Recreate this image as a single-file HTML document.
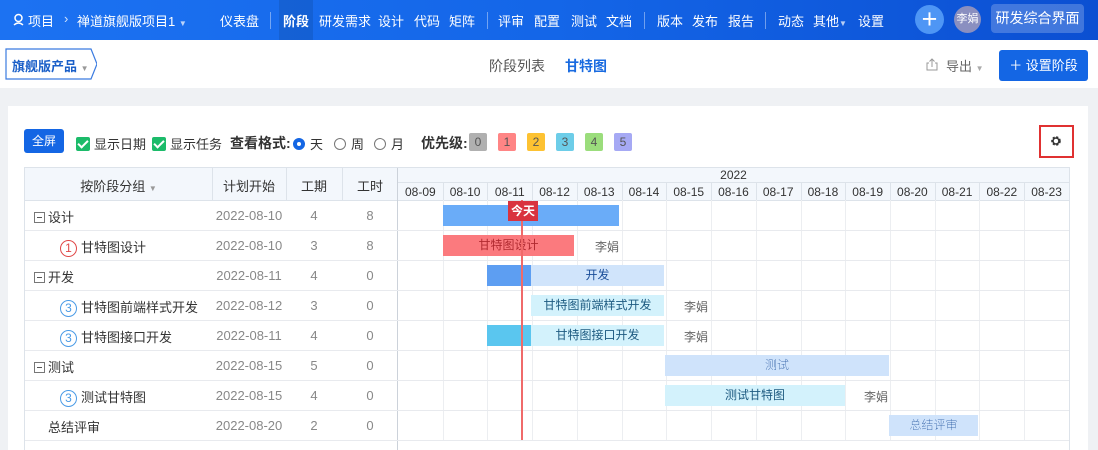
<!DOCTYPE html><html><head><meta charset="utf-8"><style>
*{margin:0;padding:0;box-sizing:border-box}
body{width:1098px;height:450px;overflow:hidden;font-family:"Liberation Sans","Noto Sans CJK SC",sans-serif;font-size:13px;color:#333;background:#eff1f4;position:relative}
.a{position:absolute;white-space:nowrap}
#nav{position:absolute;left:0;top:0;width:1098px;height:40px;background:linear-gradient(90deg,#1c72f2,#1466e8 50%,#0b4fd2);color:#fff}
#nav .a{top:11px;font-size:13px}
.sep{position:absolute;top:12px;width:1px;height:17px;background:rgba(255,255,255,.4)}
#sub{position:absolute;left:0;top:40px;width:1098px;height:48px;background:#fff}
#card{position:absolute;left:8px;top:106px;width:1080px;height:344px;background:#fff}
.cb{display:inline-block;width:14px;height:14px;background:#1cbb6a;border-radius:2px;vertical-align:-2px;margin-right:4px;position:relative}
.cb:after{content:"";position:absolute;left:4px;top:1px;width:4px;height:8px;border:solid #fff;border-width:0 2px 2px 0;transform:rotate(45deg)}
.rd{display:inline-block;width:12px;height:12px;border:1px solid #777;border-radius:50%;vertical-align:-1px;margin-right:5px}
.pr{position:absolute;top:133px;width:18px;height:18px;text-align:center;font-size:12px;line-height:18px;border-radius:2px;color:#555}
.hl{position:absolute;height:1px;background:#e8eaee}
.vl{position:absolute;width:1px;background:#eceef1}
.bar{position:absolute;height:21px;text-align:center;line-height:21px;font-size:12px}
.c{position:absolute;text-align:center;color:#888}
.num{display:inline-block;width:17px;height:17px;border:1px solid #4a9be6;border-radius:50%;text-align:center;line-height:15px;font-size:12px;color:#4a9be6;margin-right:4px}
.mn{display:inline-block;width:11px;height:11px;border:1px solid #777;vertical-align:-1px;margin-right:3px;position:relative}
.mn:after{content:"";position:absolute;left:2px;top:4px;width:5px;height:1px;background:#555}
</style></head><body>
<div id="nav">
<svg style="position:absolute;left:13px;top:13px" width="11" height="13" viewBox="0 0 11 13"><circle cx="5.5" cy="5" r="3.5" fill="none" stroke="#fff" stroke-width="1.5"/><path d="M1 12 Q5.5 8 10 12" fill="none" stroke="#fff" stroke-width="1.5"/></svg>
<div class="a" style="left:28px">项目</div>
<div class="a" style="left:64px;opacity:.8">›</div>
<div class="a" style="left:77px">禅道旗舰版项目1 <span style="font-size:8px;opacity:.7">▼</span></div>
<div class="a" style="left:220px">仪表盘</div>
<div class="sep" style="left:270px"></div>
<div style="position:absolute;left:279px;top:0;width:34px;height:40px;background:rgba(0,0,0,.1)"></div>
<div class="a" style="left:283px;font-weight:bold">阶段</div>
<div class="a" style="left:319px">研发需求</div>
<div class="a" style="left:378px">设计</div>
<div class="a" style="left:414px">代码</div>
<div class="a" style="left:449px">矩阵</div>
<div class="sep" style="left:487px"></div>
<div class="a" style="left:498px">评审</div>
<div class="a" style="left:534px">配置</div>
<div class="a" style="left:571px">测试</div>
<div class="a" style="left:606px">文档</div>
<div class="sep" style="left:644px"></div>
<div class="a" style="left:657px">版本</div>
<div class="a" style="left:692px">发布</div>
<div class="a" style="left:728px">报告</div>
<div class="sep" style="left:765px"></div>
<div class="a" style="left:778px">动态</div>
<div class="a" style="left:813px">其他<span style="font-size:8px;opacity:.7">▼</span></div>
<div class="a" style="left:858px">设置</div>
<div style="position:absolute;left:915px;top:5px;width:29px;height:29px;border-radius:50%;background:#4e96f5;color:#fff;font-size:27px;line-height:28px;text-align:center">+</div>
<div style="position:absolute;left:954px;top:6px;width:27px;height:27px;border-radius:50%;background:#8a8fc0;color:#fff;font-size:11px;line-height:27px;text-align:center">李娟</div>
<div style="position:absolute;left:991px;top:4px;width:93px;height:29px;border-radius:4px;background:rgba(255,255,255,.22);color:#fff;font-size:14px;line-height:29px;text-align:center">研发综合界面</div>
</div>
<div id="sub">
<svg style="position:absolute;left:5px;top:7px" width="92" height="34"><path d="M1 2 H86 L92 17 L86 32 H1 Z" fill="#fff" stroke="#3b7be0" stroke-width="1.2"/></svg>
<div class="a" style="left:12px;top:16px;color:#1a5fc8;font-weight:bold;font-size:13px">旗舰版产品 <span style="font-size:8px;color:#999">▼</span></div>
<div class="a" style="left:489px;top:16px;color:#555;font-size:14px">阶段列表</div>
<div class="a" style="left:565px;top:16px;color:#1a6be0;font-weight:bold;font-size:14px">甘特图</div>
<svg style="position:absolute;left:926px;top:18px" width="12" height="13" viewBox="0 0 12 13"><path d="M3 5 H1 V12 H11 V5 H9 M6 9 V1 M3.5 3.5 L6 1 L8.5 3.5" fill="none" stroke="#999" stroke-width="1"/></svg>
<div class="a" style="left:946px;top:16px;color:#666;font-size:13px">导出 <span style="font-size:8px;color:#aaa">▼</span></div>
<div style="position:absolute;left:999px;top:10px;width:89px;height:31px;border-radius:3px;background:#1466e4;color:#fff;font-size:13px;line-height:31px;text-align:center">＋ 设置阶段</div>
</div>
<div id="card"></div>
<div style="position:absolute;left:24px;top:129px;width:40px;height:24px;border-radius:3px;background:#1466e4;color:#fff;font-size:12px;line-height:24px;text-align:center">全屏</div>
<div class="a" style="left:76px;top:134px"><span class="cb"></span>显示日期</div>
<div class="a" style="left:152px;top:134px"><span class="cb"></span>显示任务</div>
<div class="a" style="left:230px;top:133px;font-weight:bold;font-size:14px">查看格式:</div>
<div class="a" style="left:293px;top:134px"><span class="rd" style="border:4px solid #1466e4"></span>天</div>
<div class="a" style="left:334px;top:134px"><span class="rd"></span>周</div>
<div class="a" style="left:374px;top:134px"><span class="rd"></span>月</div>
<div class="a" style="left:421px;top:133px;font-weight:bold;font-size:14px">优先级:</div>
<div class="pr" style="left:469px;background:#b0b0b0">0</div>
<div class="pr" style="left:498px;background:#ff8585">1</div>
<div class="pr" style="left:527px;background:#fdc232">2</div>
<div class="pr" style="left:556px;background:#6dcde8">3</div>
<div class="pr" style="left:585px;background:#9bdd7c">4</div>
<div class="pr" style="left:614px;background:#a6a9f4">5</div>
<div style="position:absolute;left:1039px;top:125px;width:35px;height:33px;border:2px solid #e03131"></div>
<svg style="position:absolute;left:1050px;top:135px" width="12" height="12" viewBox="0 0 12 12"><circle cx="6" cy="6" r="3.6" fill="none" stroke="#333" stroke-width="2.4" stroke-dasharray="2 1.4"/><circle cx="6" cy="6" r="3" fill="none" stroke="#333" stroke-width="1.5"/></svg>
<div style="position:absolute;left:24px;top:167px;width:1046px;height:283px;border:1px solid #dde3ea;border-bottom:none"></div>
<div style="position:absolute;left:25px;top:168px;width:373px;height:32px;background:#f3f7fc"></div>
<div style="position:absolute;left:398px;top:168px;width:671px;height:32px;background:#f3f7fc"></div>
<div class="hl" style="left:398px;top:182px;width:671px;background:#dde3ea"></div>
<div class="hl" style="left:25px;top:200px;width:1044px;background:#dde3ea"></div>
<div class="vl" style="left:212px;top:168px;height:32px;background:#dde3ea"></div>
<div class="vl" style="left:286px;top:168px;height:32px;background:#dde3ea"></div>
<div class="vl" style="left:342px;top:168px;height:32px;background:#dde3ea"></div>
<div class="vl" style="left:397px;top:168px;height:282px;background:#ccd2da"></div>
<div class="c" style="left:25px;width:187px;top:176px;color:#333">按阶段分组 <span style="font-size:8px;color:#999">▼</span></div>
<div class="c" style="left:212px;width:74px;top:176px;color:#333">计划开始</div>
<div class="c" style="left:286px;width:56px;top:176px;color:#333">工期</div>
<div class="c" style="left:342px;width:56px;top:176px;color:#333">工时</div>
<div class="c" style="left:398px;width:671px;top:168px;font-size:12px;color:#333">2022</div>
<div id="g"></div>
<script>
var h='',x0=398,w=44.73,days=['08-09','08-10','08-11','08-12','08-13','08-14','08-15','08-16','08-17','08-18','08-19','08-20','08-21','08-22','08-23'];
days.forEach(function(d,i){var x=x0+i*w;h+='<div class="c" style="left:'+x+'px;width:'+w+'px;top:185px;font-size:12px;color:#333">'+d+'</div>';if(i)h+='<div class="vl" style="left:'+x+'px;top:183px;height:17px;background:#dde3ea"></div><div class="vl" style="left:'+x+'px;top:200px;height:240px"></div>';});
for(var r=1;r<=8;r++)h+='<div class="hl" style="left:25px;top:'+(200+r*30)+'px;width:1044px"></div>';
var rows=[['<span class="mn"></span>设计',34,'2022-08-10',4,8],['<span class="num" style="border-color:#e04848;color:#e04848">1</span>甘特图设计',60,'2022-08-10',3,8],['<span class="mn"></span>开发',34,'2022-08-11',4,0],['<span class="num">3</span>甘特图前端样式开发',60,'2022-08-12',3,0],['<span class="num">3</span>甘特图接口开发',60,'2022-08-11',4,0],['<span class="mn"></span>测试',34,'2022-08-15',5,0],['<span class="num">3</span>测试甘特图',60,'2022-08-15',4,0],['总结评审',48,'2022-08-20',2,0]];
rows.forEach(function(r,i){var y=200+i*30+7;h+='<div class="a" style="left:'+r[1]+'px;top:'+y+'px;font-size:13px;color:#333">'+r[0]+'</div><div class="c" style="left:212px;width:74px;top:'+(y+1)+'px">'+r[2]+'</div><div class="c" style="left:286px;width:56px;top:'+(y+1)+'px">'+r[3]+'</div><div class="c" style="left:342px;width:56px;top:'+(y+1)+'px">'+r[4]+'</div>';});
function bar(r,a,b,bg,txt,col,fw){var y=200+r*30+5;h+='<div class="bar" style="left:'+a+'px;top:'+y+'px;width:'+(b-a)+'px;background:'+bg+';color:'+col+';font-weight:'+(fw||'normal')+'">'+txt+'</div>';}
function own(r,x){h+='<div class="a" style="left:'+x+'px;top:'+(200+r*30+8)+'px;font-size:12px;color:#666">李娟</div>';}
bar(0,443,619,'#6aacf8','','#fff');
bar(1,443,574,'#fb7a7e','甘特图设计','#b02a30');own(1,595);
bar(2,487,664,'linear-gradient(90deg,#5d9ef2 25%,#d0e4fb 25%)','<span style="margin-left:44px">开发</span>','#1a4d99');
bar(3,531,664,'#d3f2fc','甘特图前端样式开发','#1d5a80');own(3,684);
bar(4,487,664,'linear-gradient(90deg,#5ac6ef 25%,#d3f2fc 25%)','<span style="margin-left:44px">甘特图接口开发</span>','#1d5a80');own(4,684);
bar(5,665,889,'#cfe3fb','测试','#1a4d99',1);
bar(6,665,845,'#d3f2fc','测试甘特图','#1d5a80');own(6,864);
bar(7,889,978,'#cfe3fb','总结评审','#1a4d99',1);
h+='<div style="position:absolute;left:521px;top:200px;width:2px;height:240px;background:#f06a6a"></div><div style="position:absolute;left:508px;top:201px;width:30px;height:20px;background:#d9333f;color:#fff;font-size:12px;font-weight:bold;text-align:center;line-height:20px">今天</div>';
document.getElementById('g').innerHTML=h;
</script>
</body></html>
